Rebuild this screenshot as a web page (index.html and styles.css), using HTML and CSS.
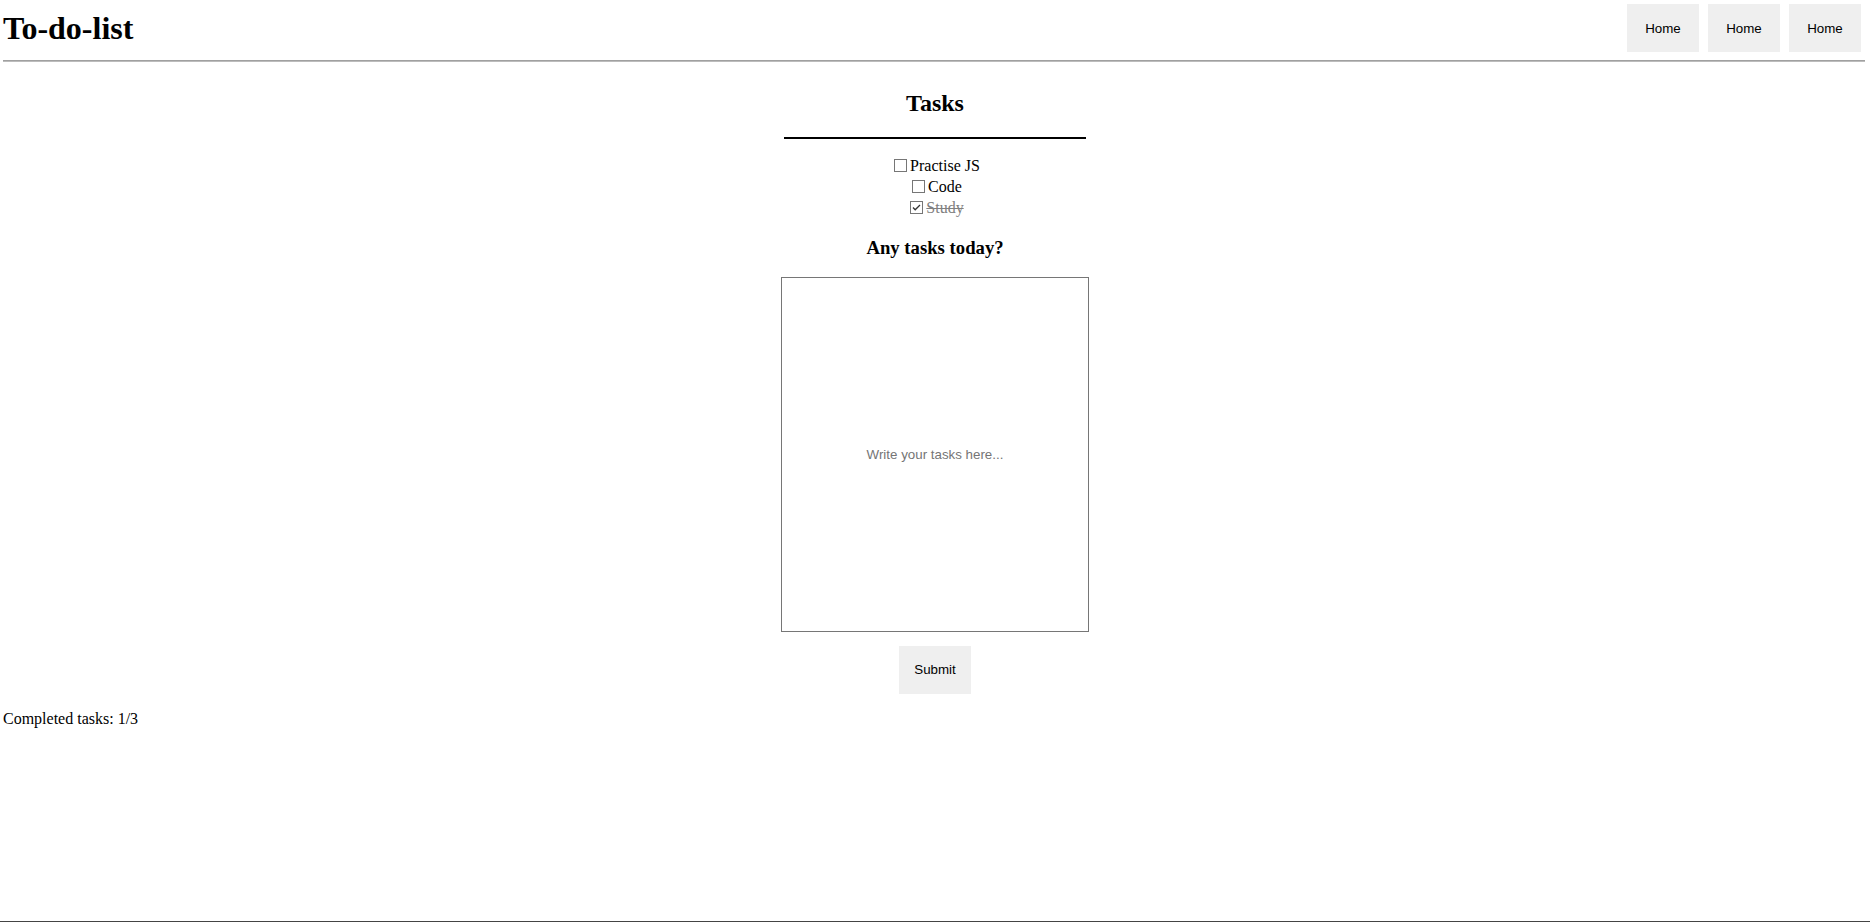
FILE: index.html
```html
<!DOCTYPE html>
<html lang="en">
<head>
<meta charset="utf-8">
<title>To-do-list</title>
<link rel="stylesheet" href="styles.css">
</head>
<body>
<div class="page">
  <header class="topbar">
    <h1 class="logo">To-do-list</h1>
    <nav class="nav">
      <button class="btn">Home</button>
      <button class="btn">Home</button>
      <button class="btn">Home</button>
    </nav>
  </header>
  <hr class="rule">
  <main class="tasks">
    <h2 class="tasks-title">Tasks</h2>
    <div class="divider"></div>
    <ul class="task-list">
      <li class="task"><svg class="box" width="13" height="13" viewBox="0 0 13 13"><rect x="0.5" y="0.5" width="12" height="12" fill="#fff" stroke="#767676"/></svg>Practise JS</li>
      <li class="task"><svg class="box" width="13" height="13" viewBox="0 0 13 13"><rect x="0.5" y="0.5" width="12" height="12" fill="#fff" stroke="#767676"/></svg>Code</li>
      <li class="task task-done"><svg class="box" width="13" height="13" viewBox="0 0 13 13"><rect x="0.5" y="0.5" width="12" height="12" fill="#fff" stroke="#767676"/><polyline points="3,6.5 5.2,8.8 10,4" fill="none" stroke="#333" stroke-width="1.3"/></svg><span class="done-text">Study</span></li>
    </ul>
    <h3 class="prompt">Any tasks today?</h3>
    <textarea class="entry" placeholder="Write your tasks here..."></textarea>
    <button class="btn submit">Submit</button>
  </main>
  <p class="summary">Completed tasks: 1/3</p>
  <footer class="foot"></footer>
</div>
</body>
</html>
```

FILE: styles.css
```css
html, body {
  margin: 0;
  padding: 0;
  background: #fff;
}

body {
  font-family: "Liberation Serif", "Times New Roman", serif;
  font-size: 16px;
  color: #000;
}

.page {
  min-height: 100vh;
  display: flex;
  flex-direction: column;
  box-sizing: border-box;
}

.topbar {
  display: flex;
  justify-content: space-between;
  align-items: center;
  padding: 4px 9px 0 3px;
}

.logo {
  margin: 0;
  font-size: 32px;
  font-weight: bold;
  line-height: normal;
}

.nav {
  display: flex;
  gap: 9px;
}

.btn {
  width: 72px;
  height: 48px;
  padding: 0;
  border: 0;
  background: #efefef;
  color: #000;
  font-family: "Liberation Sans", Arial, sans-serif;
  font-size: 13.333px;
  cursor: pointer;
}

.rule {
  margin: 8px 5px 0 3px;
  height: 0;
  border: 0;
  border-top: 1px solid #a0a0a0;
  border-bottom: 1px solid #bcbcbc;
}

.tasks {
  display: flex;
  flex-direction: column;
  align-items: center;
}

.tasks-title {
  margin: 28px 0 0;
  font-size: 24px;
  font-weight: bold;
  line-height: normal;
}

.divider {
  width: 302px;
  margin-top: 19.6px;
  border-top: 2px solid #000;
}

.task-list {
  list-style: none;
  margin: 16.8px 0 0;
  padding: 0;
  text-align: center;
  line-height: 21px;
}

.box {
  margin: 0 3px 0 4px;
  vertical-align: -1px;
}

.done-text {
  color: #808080;
  text-decoration: line-through;
}

.prompt {
  margin: 18.3px 0 0;
  font-size: 18.72px;
  font-weight: bold;
  line-height: normal;
}

.entry {
  display: block;
  box-sizing: border-box;
  width: 308px;
  height: 355px;
  margin-top: 18.2px;
  padding: 169.2px 2px 2px;
  border: 1px solid #767676;
  font-family: "Liberation Sans", Arial, sans-serif;
  font-size: 13.333px;
  line-height: normal;
  text-align: center;
  resize: none;
  outline: none;
}

.entry::placeholder {
  color: #757575;
}

.submit {
  margin-top: 14px;
}

.summary {
  margin: 16px 0 0;
  padding-left: 3px;
}

.foot {
  margin-top: auto;
  height: 0;
  border-top: 1px solid #444;
}
```
